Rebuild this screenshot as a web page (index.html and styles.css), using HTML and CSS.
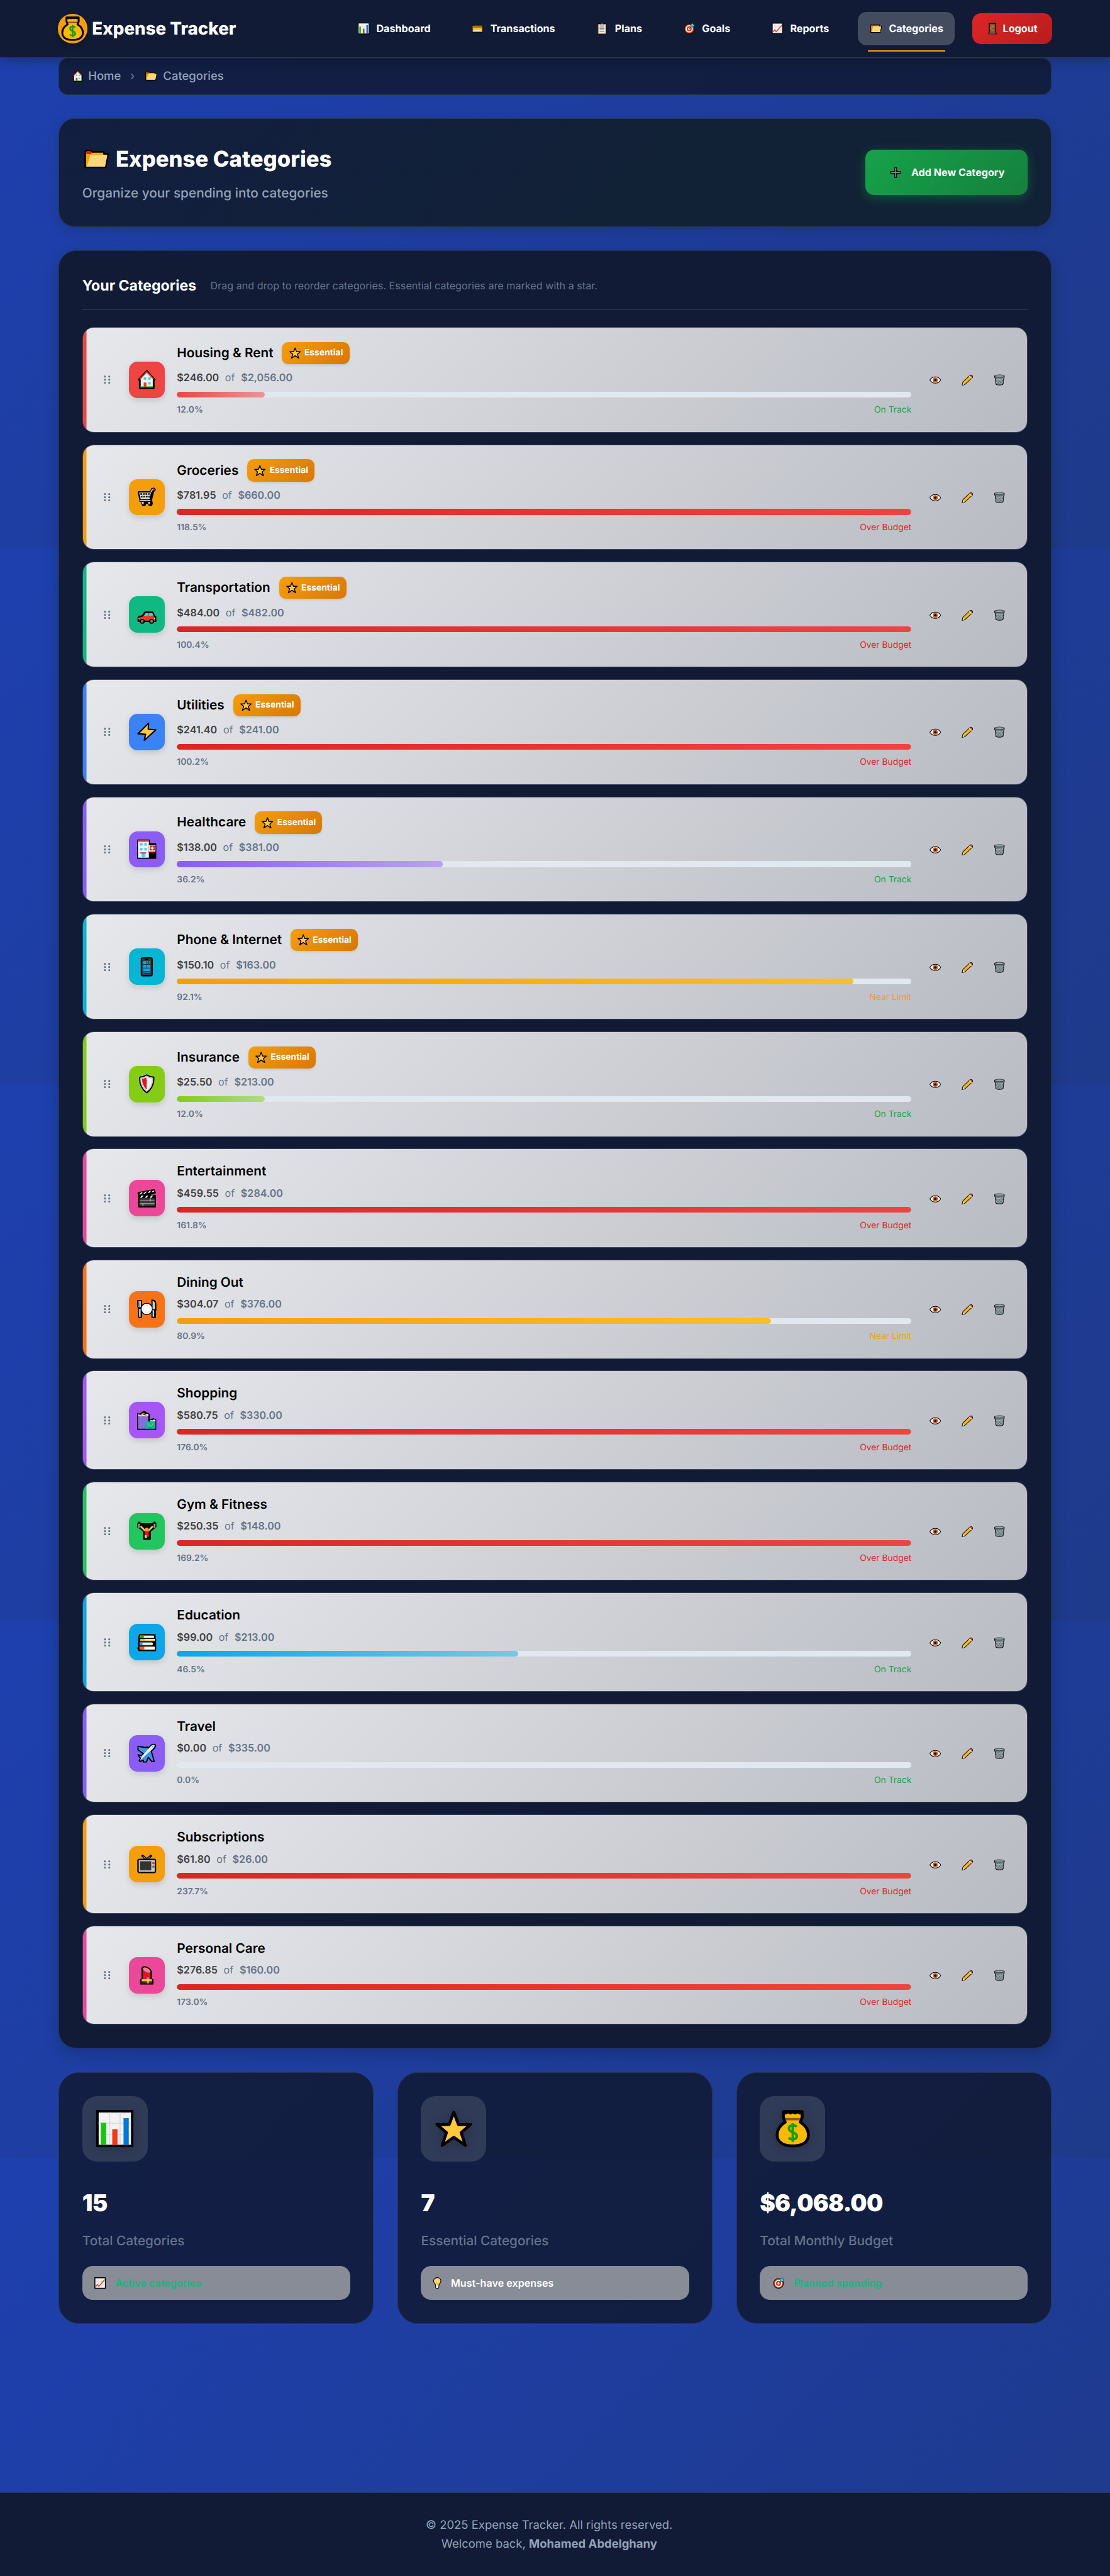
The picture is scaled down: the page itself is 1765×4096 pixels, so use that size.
FILE: index.html
```html
<!DOCTYPE html>
<html lang="en">
<head>
<meta charset="utf-8">
<title>Expense Categories</title>
<link rel="stylesheet" href="styles.css">
</head>
<body>
<svg class="defs" aria-hidden="true">
<symbol id="chart" viewBox="0 0 32 32"><path d="M1 1h30v30H1z" fill="#f2f2f2" stroke="#000" stroke-width="2.2"/><path d="M11.5 2v28M20.500 2v28M2 11.500h28M2 21h28" stroke="#ddd" stroke-width="1"/><path d="M4 11h4.500v19H4z" fill="#16c60c"/><path d="M13.800 16.500h4.500V30h-4.500z" fill="#f03a17"/><path d="M23.500 7h4.500v23h-4.500z" fill="#0078d7"/></symbol>
<symbol id="trend" viewBox="0 0 32 32"><path d="M1.500 1.500h29v29h-29z" fill="#f2f2f2" stroke="#000" stroke-width="2.6"/><path d="M11 3v26M20.500 3v26M3 11.500h26M3 21h26" stroke="#ccc" stroke-width="1"/><path d="M3.500 26l5-6 4 5L29 6" fill="none" stroke="#f03a17" stroke-width="2.400"/></symbol>
<symbol id="card" viewBox="0 0 32 32"><rect x="1.500" y="7" width="29" height="20" rx="2" fill="#ffb900" stroke="#111" stroke-width="2.600"/><path d="M3 9.500h26v4H3z" fill="#8e562e"/><path d="M6 19.500h20v3H6z" fill="#e8e8e8"/></symbol>
<symbol id="clip" viewBox="0 0 32 32"><rect x="5" y="4" width="22" height="27" rx="2" fill="#ececec" stroke="#000" stroke-width="4"/><rect x="5.500" y="4.500" width="21" height="26" rx="1" fill="#ececec" stroke="#a9794f" stroke-width="2"/><path d="M11 7V4h3a2 2 0 0 1 4 0h3v3z" fill="#ccc" stroke="#555" stroke-width="1"/><path d="M9.500 12h13M9.500 16h13M9.500 20h13M9.500 24h13" stroke="#555" stroke-width="1.500"/></symbol>
<symbol id="target" viewBox="0 0 32 32"><circle cx="15.500" cy="17" r="13.500" fill="#f03a17" stroke="#111" stroke-width="2"/><circle cx="15.500" cy="17" r="8.500" fill="none" stroke="#fff" stroke-width="3"/><circle cx="15.500" cy="17" r="3" fill="#fff"/><path d="M16 17l8-9" stroke="#0078d7" stroke-width="2"/><path d="M20 12V6l5-5 2 4 4 1-5 6z" fill="#31d2f7" stroke="#111" stroke-width="1"/></symbol>
<symbol id="folder" viewBox="0 0 32 24"><path d="M1.200 2.800l1.500-1.600h5.500l1.500 1.600h15.500v2.700h5.500L27.500 22.800H1.200z" fill="#f2a600" stroke="#000" stroke-width="2" stroke-linejoin="round"/><path d="M2.500 3h6.500v2.500H2.500z" fill="#e81123"/><path d="M7.800 6.500h21.700L26.500 21.800H3.200z" fill="#ffd679"/></symbol>
<symbol id="door" viewBox="0 0 32 32"><path d="M7 2h18v25l2 4H5l2-4z" fill="#5c3a21" stroke="#000" stroke-width="2"/><path d="M9 4h14v23H9z" fill="#8e562e"/><path d="M11.500 6.500h9v8h-9zM11.500 18h9v6h-9z" fill="#a9713f" stroke="#6b4020"/><circle cx="11" cy="16" r="1.600" fill="#ffb900"/><path d="M7 28h18v2H7z" fill="#bbb"/></symbol>
<symbol id="house" viewBox="0 0 32 32"><path d="M4.500 30.500V16.500H3L16 2l13 14.500h-1.500v14z" fill="#f2f2f2" stroke="#000" stroke-width="3" stroke-linejoin="round"/><path d="M4.500 15.500L16 3.500l11.500 12" fill="none" stroke="#f03a17" stroke-width="2"/><path d="M11 12.500h4v4h-4zM18.500 12.500h4v4h-4zM18.500 20.500h4v4h-4z" fill="#31d2f7"/><path d="M11 21h4.500v8H11z" fill="#f03a17"/><path d="M5.500 27.500H11V29.500H5.500zM15.500 27.500h11v2h-11z" fill="#16c60c"/></symbol>
<symbol id="plus" viewBox="0 0 32 32"><path d="M13.500 2h5v11.500H30v5H18.500V30h-5V18.500H2v-5h11.500z" fill="#8c9196" stroke="#0a0a0a" stroke-width="2.400"/></symbol>
<symbol id="star" viewBox="0 0 32 32"><path d="M16 2l4 10.500h10.500L22.300 19.500 26 30.500l-10-7-10 7 3.700-11L1.500 12.500H12z" fill="#ffc83d" stroke="#000" stroke-width="2.500" stroke-linejoin="round"/></symbol>
<symbol id="bag" viewBox="0 0 32 32"><path d="M8 1.500h16v5l-1.500 4C28 14 30.500 19 29 24.500 27.500 29 22 31 16 31S4.500 29 3 24.500C1.500 19 4 14 9.500 10.500L8 6.500z" fill="#ffb900" stroke="#000" stroke-width="2.500" stroke-linejoin="round"/><path d="M8 1h16v2.500l-2 .5-2-1-2 1-2-1-2 1-2-1-2 1-2-1z"/><path d="M9.800 7h12.400v2H9.800z" fill="#8e562e"/><path d="M19.500 14.500c-1.500-1.600-6.800-1.800-6.800 1.500 0 3.800 6.800 3 6.800 6.500 0 3.300-5.300 3.200-7 1.500M16 11.500v16" fill="none" stroke="#13a10e" stroke-width="2.200"/></symbol>
<symbol id="cart" viewBox="0 0 32 32"><path d="M2 7h20l2-5 4-1 2.500 3-3 3-4 16h1l1 4-2 3.500-4-1-1-3-4 0-1 3-4 1-2-3.500 0-3.500H4.500V21L2 9z" stroke="#000" stroke-width="1.500" stroke-linejoin="round"/><path d="M3.500 8.500h19.500l-2.500 11H6z" fill="#e4e4e4"/><path d="M5.500 11h16M6 15.500h15" stroke="#111" stroke-width="2.600" stroke-dasharray="3 1.200"/><path d="M23 8l2-4 3-1.500M5 22h17" fill="none" stroke="#ddd" stroke-width="1.800"/><path d="M26.500 2.500l2.500 2" stroke="#f03a17" stroke-width="2.500"/><path d="M7.500 24h3.500v4H8.500zM18 24h3.500v4H19z" fill="#ccc"/></symbol>
<symbol id="car" viewBox="0 0 32 32"><path d="M2 27v-7l7-2 4-6h13l3 7 2 1v7z" fill="#f03a17" stroke="#000" stroke-width="2.500" stroke-linejoin="round"/><path d="M11.500 18l3-4.500h4V18zM20 13.500h5l2 4.500h-7z" fill="#31d2f7"/><path d="M29 21.500v2M3 21.500v2" stroke="#fff" stroke-width="1.200"/><circle cx="8.500" cy="27" r="3.200" fill="#777" stroke="#000" stroke-width="1.800"/><circle cx="24" cy="27" r="3.200" fill="#777" stroke="#000" stroke-width="1.800"/></symbol>
<symbol id="bolt" viewBox="0 0 32 32"><path d="M19 2L1.500 19.500 14 20.500 12 30.500 31 13 18.500 12z" fill="#ffc83d" stroke="#000" stroke-width="2.300" stroke-linejoin="round"/></symbol>
<symbol id="hospital" viewBox="0 0 32 32"><path d="M0 0h21v6h11v26H0z"/><path d="M1.500 1.500h18V30h-18z" fill="#f2f2f2"/><path d="M1.500 1.500h18v2h-18z" fill="#e81123"/><path d="M5 6h4v4H5zM12 6h4v4h-4zM5 14h4v4H5zM12 14h4v4h-4z" fill="#31d2f7"/><path d="M5 21h10v2H5z" fill="#e81123"/><path d="M6.500 23h8v7h-8z" fill="#9ae6f9"/><path d="M8.500 23h4v7h-4z" fill="#31d2f7"/><path d="M19.500 9h11v11h-11z" fill="#f2f2f2"/><path d="M21 10h8.500v8H21z" fill="#e81123"/><path d="M24.200 11.200h2v1.800H28v2h-1.800v1.800h-2V15h-1.800v-2h1.800z" fill="#fff"/><path d="M18.500 20h12v1.500h-12z" fill="#e81123"/></symbol>
<symbol id="phone" viewBox="0 0 32 32"><rect x="7" y="1" width="18" height="30" rx="2.500" fill="#3a3a3a" stroke="#000" stroke-width="2"/><path d="M10 6.500h12v19H10z" fill="#10a5e8"/><path d="M16 6.500v11M10 12h6M16 9.500h6M16 12h6M19 6.500v5.500M10 18h12M10 23.500h12M14 23.500v2M18 23.500v2" stroke="#222" stroke-width=".9"/><path d="M13.500 3.700h5" stroke="#000" stroke-width="1.200"/></symbol>
<symbol id="shield" viewBox="0 0 32 32"><path d="M16 1.500c4 2.400 7.500 3.200 11.500 3.700C28 17 23.500 25 16 30.500 8.500 25 4 17 4.500 5.200 8.500 4.700 12 3.900 16 1.500z" fill="#f4f4f4" stroke="#000" stroke-width="2.400"/><path d="M16 3.500c3.500 2 6.500 2.800 9.700 3.200C26 16.500 22 23.500 16 28.300 10 23.500 6 16.500 6.300 6.700 9.500 6.300 12.500 5.500 16 3.500z" fill="none" stroke="#c8c8c8" stroke-width="2"/><path d="M15.500 5.500c-2.500 1.400-5 2-7.300 2.400.2 6.800 2.300 12.600 7.300 17.300l1-2-1-2 1-2-1-2 1-2-1-2 1-2-1-2z" fill="#e81123"/></symbol>
<symbol id="clapper" viewBox="0 0 32 32"><path d="M1.500 6.500L28.500 1.500l2 5.500-15 4h15V30.500h-28V12z" stroke="#000" stroke-width="1.500" stroke-linejoin="round"/><path d="M4 16h25v13H4z" fill="#3a3a3a"/><path d="M3.500 10l3-3.500 3-.5-3 3.500zM10.500 8.700l3-3.500 3-.5-3 3.500zM17.500 7.400l3-3.500 3-.5-3 3.500zM24 6l3-3.300 1.500 2zM5 15l2.500-3.500h3L8 15zM13 15l2.500-3.500h3L16 15zM21 15l2.500-3.500h3L24 15z" fill="#fff"/><path d="M4 20.300h25M4 25h25M22 16v4.300M9.500 25v4" stroke="#ddd"/></symbol>
<symbol id="dish" viewBox="0 0 32 32"><path d="M.5 2h7v28H2.500V15L.5 12zM24.500 1c4 0 7 2 7 7v10h-1v12h-6z" stroke="#000" stroke-width="1.500" stroke-linejoin="round"/><circle cx="16" cy="16" r="9.500" fill="#fff" stroke="#000" stroke-width="1.600"/><circle cx="16" cy="16" r="6" fill="none" stroke="#ddd"/><path d="M1.800 3v8l1.700 1.500h2.200V3M3.700 3v8" fill="none" stroke="#d0d0d0" stroke-width="1.200"/><path d="M3.300 16h2.600v13H3.300zM25.700 18h2.600v11h-2.600z" fill="#a6d8f5"/><path d="M25.700 2.500c2.500.5 4 2.500 4 5.500v8.500h-4z" fill="#d0d0d0"/></symbol>
<symbol id="bags" viewBox="0 0 32 32"><path d="M0 3l3 2 4-2c2-3 7-3 9 0l3 1 2 2v7l3 1 3-2 2 2 3-1v19H0z"/><path d="M1.500 7l3 1.500 4-1.500 5 1.500 5-1.500V30h-17z" fill="#886ce4"/><path d="M2 5.500l3 2 3-2 4 2 4-2 3.500 1-1 2H2z" fill="#eee"/><path d="M6 11c0-8 9-8 9 0" fill="none" stroke="#f2a600" stroke-width="1.600"/><path d="M14 18h16.500v12H14z" fill="#00b7a0"/><path d="M22 15l3 1.500 3-2 2.500 1.500v2H22z" fill="#eee"/><path d="M17.500 20c0 7 9 7 9 0" fill="none" stroke="#f2a600" stroke-width="1.500"/></symbol>
<symbol id="gym" viewBox="0 0 32 32"><path d="M3 1l4 3h18l4-3 2.500 3v5L28 12l-6 5v13H11V17l-6-5-4-2V4z" stroke="#000" stroke-width="1.500" stroke-linejoin="round"/><path d="M1.500 4h3v7h-3zM27.500 4h3v7h-3z" fill="#999"/><path d="M6 8l6.500 7h7L26 8" fill="none" stroke="#ffc83d" stroke-width="3"/><path d="M12.500 15h7v9h-7z" fill="#e81123"/><circle cx="16" cy="13.500" r="3" fill="#f0a13a"/><path d="M12.500 23h4v5h-4z" fill="#ffc83d"/><path d="M16 23h3.500v3H16z" fill="#0063b1"/></symbol>
<symbol id="books" viewBox="0 0 32 32"><path d="M4 3h26v7.500h1v5l-2 3h2V30H3l-2-4 2-4-1-4 1-5-1-4z" stroke="#000" stroke-width="1.500" stroke-linejoin="round"/><path d="M5 4.500h22v4H4z" fill="#16c60c"/><path d="M12 5.500h16v3H11z" fill="#fff"/><path d="M5 10.500h25v3.500H5z" fill="#ffb900"/><path d="M13 11h17v1.800H13z" fill="#fff"/><path d="M4 16h21v5H4z" fill="#3a96dd"/><path d="M9 16.700h17v3.500H9z" fill="#fff"/><path d="M3.500 23h26v5.500h-25z" fill="#f7630c"/><path d="M12 23.500h17.500v4.500H12z" fill="#fff"/></symbol>
<symbol id="plane" viewBox="0 0 32 32"><path d="M1.500 5l13 2 2-1 2 2 5-5c3-2 8-2 7 2-1 3-4 6-7 8l5 17h-4l-6-7-3 8h-5v-3l-5 2-2-1 2-4-4-6 5 1 5-2L1.500 11z" fill="#3a96dd" stroke="#000" stroke-width="2" stroke-linejoin="round"/><path d="M5 28l4-8L22.500 5c3-3 7-3 6-.5-1 3-4 6-7 8.500L12 22z" fill="#eee"/><path d="M24 6.500l3-2" stroke="#31d2f7" stroke-width="2"/></symbol>
<symbol id="tv" viewBox="0 0 32 32"><path d="M9 2l7 6 7-6" fill="none" stroke="#000" stroke-width="4" stroke-linecap="round"/><path d="M10 3l6 5 6-5" fill="none" stroke="#999" stroke-width="1.300"/><rect x="1.500" y="8" width="29" height="21.500" rx="2" fill="#ccc" stroke="#000" stroke-width="2.400"/><path d="M4.500 11h19v15h-19z" fill="#333"/><circle cx="27" cy="14" r="2.100" fill="#f03a17"/><circle cx="27" cy="20" r="2.100" fill="#777"/></symbol>
<symbol id="lipstick" viewBox="0 0 32 32"><path d="M8.500 24V5c2-5 13-1 15 6v13h2.500v7H6v-7z" fill="#e81123" stroke="#000" stroke-width="2.400" stroke-linejoin="round"/><path d="M9.500 5c3-3 11-.5 13 6-3 3-12 0-13-6z" fill="#e88090"/><path d="M7.500 23h17v3.500h-17z" fill="#ffb900"/><path d="M7.500 26.500h17V30h-17z" fill="#333"/><path d="M16 20h4v10h-4z" fill="#fff" opacity=".5"/></symbol>
<symbol id="eye" viewBox="0 0 32 32"><path d="M1 16c7-11.500 23-11.500 30 0-7 11.500-23 11.500-30 0z" fill="#fff" stroke="#000" stroke-width="1.800"/><circle cx="16" cy="16" r="6.800" fill="#da5a14"/><circle cx="16" cy="16" r="3.200"/></symbol>
<symbol id="pencil" viewBox="0 0 32 32"><path d="M1.500 30.500l2-8.500L23.500 3c3-2.500 8.500 1.500 6.500 6L9.500 28z" fill="#ffb900" stroke="#111" stroke-width="1.800" stroke-linejoin="round"/><path d="M3 29.500l1.200-5.500 3.500 4z" fill="#eee"/><path d="M20.500 6l6 6.300 2-2-6-6.200z" fill="#ddd"/><path d="M22.700 4c3-3 8.500 2 6 6z" fill="#e83040"/></symbol>
<symbol id="trash" viewBox="0 0 32 32"><path d="M2.500 4h27l-.5 6h-1l-2 18c-4 2.500-16 2.500-20 0L4 10H3z" fill="#69797e" stroke="#000" stroke-width="1.600" stroke-linejoin="round"/><ellipse cx="16" cy="5" rx="13" ry="3.300" fill="#8fa3a8" stroke="#222" stroke-width="1.300"/><path d="M6 12l14 16M12 11l13 13M5.500 20l7 8M26 12L12 28M20 11L7 24M27 19l-7 9M26.500 14l-20 1" stroke="#c4d0d4" stroke-width="1"/></symbol>
<symbol id="bulb" viewBox="0 0 32 32"><path d="M16 1c7 0 10 5 10 9.500 0 6-5 7.500-5.500 11.500v6c-1 4-8 4-9 0v-6C11 18 6 16.500 6 10.500 6 6 9 1 16 1z" fill="#ffd679" stroke="#000" stroke-width="1.900"/><path d="M12.700 21h6.600v8h-6.600z" fill="#e8e8e8"/><path d="M13 14.500l3 5 3-5" fill="none" stroke="#ffb900" stroke-width="2"/></symbol>
<symbol id="grip" viewBox="0 0 12 14"><g fill="#64748b"><circle cx="2" cy="1.800" r="1.700"/><circle cx="9.500" cy="1.800" r="1.700"/><circle cx="2" cy="7.200" r="1.700"/><circle cx="9.500" cy="7.200" r="1.700"/><circle cx="2" cy="12.600" r="1.700"/><circle cx="9.500" cy="12.600" r="1.700"/></g></symbol>
</svg>

<header class="nav">
  <div class="brand"><span class="brand-mark"><svg><use href="#bag"/></svg></span>Expense Tracker</div>
  <nav class="links">
    <a class="link"><svg class="em"><use href="#chart"/></svg>Dashboard</a>
    <a class="link"><svg class="em"><use href="#card"/></svg>Transactions</a>
    <a class="link"><svg class="em"><use href="#clip"/></svg>Plans</a>
    <a class="link"><svg class="em"><use href="#target"/></svg>Goals</a>
    <a class="link"><svg class="em"><use href="#trend"/></svg>Reports</a>
    <a class="link active"><svg class="em"><use href="#folder"/></svg>Categories</a>
    <a class="logout"><svg class="em"><use href="#door"/></svg>Logout</a>
  </nav>
</header>

<main class="page">
  <div class="crumbs"><svg class="em"><use href="#house"/></svg><span>Home</span><span class="sep">›</span><svg class="em"><use href="#folder"/></svg><span>Categories</span></div>

  <section class="hero">
    <div>
      <h1><svg><use href="#folder"/></svg>Expense Categories</h1>
      <p>Organize your spending into categories</p>
    </div>
    <button class="add"><svg><use href="#plus"/></svg>Add New Category</button>
  </section>

  <section class="panel">
    <div class="panel-head"><h2>Your Categories</h2><p>Drag and drop to reorder categories. Essential categories are marked with a star.</p></div>
    <div class="rows">
      <article class="row c-red"><svg class="grip"><use href="#grip"/></svg><span class="tile"><svg><use href="#house"/></svg></span><div class="info"><div class="name">Housing &amp; Rent<span class="badge"><svg><use href="#star"/></svg>Essential</span></div><div class="money"><b>$246.00</b><span>of</span><i>$2,056.00</i></div><div class="bar"><div class="fill" style="width:12%"></div></div><div class="foot"><b>12.0%</b><span class="ok">On Track</span></div></div><div class="acts"><svg><use href="#eye"/></svg><svg><use href="#pencil"/></svg><svg><use href="#trash"/></svg></div></article>
      <article class="row c-amber"><svg class="grip"><use href="#grip"/></svg><span class="tile"><svg><use href="#cart"/></svg></span><div class="info"><div class="name">Groceries<span class="badge"><svg><use href="#star"/></svg>Essential</span></div><div class="money"><b>$781.95</b><span>of</span><i>$660.00</i></div><div class="bar"><div class="fill full" style="width:100%"></div></div><div class="foot"><b>118.5%</b><span class="over">Over Budget</span></div></div><div class="acts"><svg><use href="#eye"/></svg><svg><use href="#pencil"/></svg><svg><use href="#trash"/></svg></div></article>
      <article class="row c-emerald"><svg class="grip"><use href="#grip"/></svg><span class="tile"><svg><use href="#car"/></svg></span><div class="info"><div class="name">Transportation<span class="badge"><svg><use href="#star"/></svg>Essential</span></div><div class="money"><b>$484.00</b><span>of</span><i>$482.00</i></div><div class="bar"><div class="fill full" style="width:100%"></div></div><div class="foot"><b>100.4%</b><span class="over">Over Budget</span></div></div><div class="acts"><svg><use href="#eye"/></svg><svg><use href="#pencil"/></svg><svg><use href="#trash"/></svg></div></article>
      <article class="row c-blue"><svg class="grip"><use href="#grip"/></svg><span class="tile"><svg><use href="#bolt"/></svg></span><div class="info"><div class="name">Utilities<span class="badge"><svg><use href="#star"/></svg>Essential</span></div><div class="money"><b>$241.40</b><span>of</span><i>$241.00</i></div><div class="bar"><div class="fill full" style="width:100%"></div></div><div class="foot"><b>100.2%</b><span class="over">Over Budget</span></div></div><div class="acts"><svg><use href="#eye"/></svg><svg><use href="#pencil"/></svg><svg><use href="#trash"/></svg></div></article>
      <article class="row c-violet"><svg class="grip"><use href="#grip"/></svg><span class="tile"><svg><use href="#hospital"/></svg></span><div class="info"><div class="name">Healthcare<span class="badge"><svg><use href="#star"/></svg>Essential</span></div><div class="money"><b>$138.00</b><span>of</span><i>$381.00</i></div><div class="bar"><div class="fill" style="width:36.2%"></div></div><div class="foot"><b>36.2%</b><span class="ok">On Track</span></div></div><div class="acts"><svg><use href="#eye"/></svg><svg><use href="#pencil"/></svg><svg><use href="#trash"/></svg></div></article>
      <article class="row c-cyan"><svg class="grip"><use href="#grip"/></svg><span class="tile"><svg><use href="#phone"/></svg></span><div class="info"><div class="name">Phone &amp; Internet<span class="badge"><svg><use href="#star"/></svg>Essential</span></div><div class="money"><b>$150.10</b><span>of</span><i>$163.00</i></div><div class="bar"><div class="fill warn" style="width:92.1%"></div></div><div class="foot"><b>92.1%</b><span class="near">Near Limit</span></div></div><div class="acts"><svg><use href="#eye"/></svg><svg><use href="#pencil"/></svg><svg><use href="#trash"/></svg></div></article>
      <article class="row c-lime"><svg class="grip"><use href="#grip"/></svg><span class="tile"><svg><use href="#shield"/></svg></span><div class="info"><div class="name">Insurance<span class="badge"><svg><use href="#star"/></svg>Essential</span></div><div class="money"><b>$25.50</b><span>of</span><i>$213.00</i></div><div class="bar"><div class="fill" style="width:12%"></div></div><div class="foot"><b>12.0%</b><span class="ok">On Track</span></div></div><div class="acts"><svg><use href="#eye"/></svg><svg><use href="#pencil"/></svg><svg><use href="#trash"/></svg></div></article>
      <article class="row short c-pink"><svg class="grip"><use href="#grip"/></svg><span class="tile"><svg><use href="#clapper"/></svg></span><div class="info"><div class="name">Entertainment</div><div class="money"><b>$459.55</b><span>of</span><i>$284.00</i></div><div class="bar"><div class="fill full" style="width:100%"></div></div><div class="foot"><b>161.8%</b><span class="over">Over Budget</span></div></div><div class="acts"><svg><use href="#eye"/></svg><svg><use href="#pencil"/></svg><svg><use href="#trash"/></svg></div></article>
      <article class="row short c-orange"><svg class="grip"><use href="#grip"/></svg><span class="tile"><svg><use href="#dish"/></svg></span><div class="info"><div class="name">Dining Out</div><div class="money"><b>$304.07</b><span>of</span><i>$376.00</i></div><div class="bar"><div class="fill warn" style="width:80.9%"></div></div><div class="foot"><b>80.9%</b><span class="near">Near Limit</span></div></div><div class="acts"><svg><use href="#eye"/></svg><svg><use href="#pencil"/></svg><svg><use href="#trash"/></svg></div></article>
      <article class="row short c-purple"><svg class="grip"><use href="#grip"/></svg><span class="tile"><svg><use href="#bags"/></svg></span><div class="info"><div class="name">Shopping</div><div class="money"><b>$580.75</b><span>of</span><i>$330.00</i></div><div class="bar"><div class="fill full" style="width:100%"></div></div><div class="foot"><b>176.0%</b><span class="over">Over Budget</span></div></div><div class="acts"><svg><use href="#eye"/></svg><svg><use href="#pencil"/></svg><svg><use href="#trash"/></svg></div></article>
      <article class="row short c-green"><svg class="grip"><use href="#grip"/></svg><span class="tile"><svg><use href="#gym"/></svg></span><div class="info"><div class="name">Gym &amp; Fitness</div><div class="money"><b>$250.35</b><span>of</span><i>$148.00</i></div><div class="bar"><div class="fill full" style="width:100%"></div></div><div class="foot"><b>169.2%</b><span class="over">Over Budget</span></div></div><div class="acts"><svg><use href="#eye"/></svg><svg><use href="#pencil"/></svg><svg><use href="#trash"/></svg></div></article>
      <article class="row short c-sky"><svg class="grip"><use href="#grip"/></svg><span class="tile"><svg><use href="#books"/></svg></span><div class="info"><div class="name">Education</div><div class="money"><b>$99.00</b><span>of</span><i>$213.00</i></div><div class="bar"><div class="fill" style="width:46.5%"></div></div><div class="foot"><b>46.5%</b><span class="ok">On Track</span></div></div><div class="acts"><svg><use href="#eye"/></svg><svg><use href="#pencil"/></svg><svg><use href="#trash"/></svg></div></article>
      <article class="row short c-violet"><svg class="grip"><use href="#grip"/></svg><span class="tile"><svg><use href="#plane"/></svg></span><div class="info"><div class="name">Travel</div><div class="money"><b>$0.00</b><span>of</span><i>$335.00</i></div><div class="bar"><div class="fill" style="width:0%"></div></div><div class="foot"><b>0.0%</b><span class="ok">On Track</span></div></div><div class="acts"><svg><use href="#eye"/></svg><svg><use href="#pencil"/></svg><svg><use href="#trash"/></svg></div></article>
      <article class="row short c-amber"><svg class="grip"><use href="#grip"/></svg><span class="tile"><svg><use href="#tv"/></svg></span><div class="info"><div class="name">Subscriptions</div><div class="money"><b>$61.80</b><span>of</span><i>$26.00</i></div><div class="bar"><div class="fill full" style="width:100%"></div></div><div class="foot"><b>237.7%</b><span class="over">Over Budget</span></div></div><div class="acts"><svg><use href="#eye"/></svg><svg><use href="#pencil"/></svg><svg><use href="#trash"/></svg></div></article>
      <article class="row short c-pink"><svg class="grip"><use href="#grip"/></svg><span class="tile"><svg><use href="#lipstick"/></svg></span><div class="info"><div class="name">Personal Care</div><div class="money"><b>$276.85</b><span>of</span><i>$160.00</i></div><div class="bar"><div class="fill full" style="width:100%"></div></div><div class="foot"><b>173.0%</b><span class="over">Over Budget</span></div></div><div class="acts"><svg><use href="#eye"/></svg><svg><use href="#pencil"/></svg><svg><use href="#trash"/></svg></div></article>
    </div>
  </section>

  <section class="stats">
    <div class="stat"><span class="stat-icon"><svg><use href="#chart"/></svg></span><strong>15</strong><p>Total Categories</p><div class="pill good"><svg><use href="#trend"/></svg>Active categories</div></div>
    <div class="stat"><span class="stat-icon"><svg><use href="#star"/></svg></span><strong>7</strong><p>Essential Categories</p><div class="pill tight"><svg><use href="#bulb"/></svg>Must-have expenses</div></div>
    <div class="stat"><span class="stat-icon"><svg class="tall"><use href="#bag"/></svg></span><strong>$6,068.00</strong><p>Total Monthly Budget</p><div class="pill good wide"><svg><use href="#target"/></svg>Planned spending</div></div>
  </section>
</main>

<footer class="bottom"><p>© 2025 Expense Tracker. All rights reserved.</p><p>Welcome back, <b>Mohamed Abdelghany</b></p></footer>
</body>
</html>
```
FILE: styles.css
```css
html { font-size: 18.482px; }
* { box-sizing: border-box; margin: 0; padding: 0; }
body {
  font-family: Inter, "Liberation Sans", sans-serif;
  font-size: 1rem;
  color: #fff;
  height: 4096px;
  display: flex;
  flex-direction: column;
  overflow: hidden;
  text-rendering: geometricPrecision;
  background: linear-gradient(135deg, #1e40af, #1e3a8a) 0 1rem / 100% 46.16rem;
}
.defs { position: absolute; width: 0; height: 0; }
svg { display: block; flex: none; overflow: visible; }
b, i { font-style: normal; }

/* Top bar */
.nav {
  height: 4.975rem;
  flex: none;
  padding: 0 5rem;
  display: flex;
  align-items: center;
  justify-content: space-between;
  background: #111b35;
  border-bottom: 1px solid #2c3550;
  box-shadow: 0 .2rem 1rem rgba(0,0,0,.25);
  position: relative;
  z-index: 1;
}
.brand { display: flex; align-items: center; gap: .42rem; font-size: 1.5rem; font-weight: 800; }
.brand-mark { width: 2.5rem; height: 2.5rem; font-size: 1rem; border-radius: 50%; background: #f59e0b; display: grid; place-items: center; box-shadow: 0 .2rem .5rem rgba(0,0,0,.2); }
.brand-mark svg { width: 2.1rem; height: 2.1rem; }
.links { display: flex; align-items: center; gap: 1.5rem; font-size: .875rem; font-weight: 700; }
.em { width: 1rem; height: 1rem; }
.link { height: 2.9rem; padding: 0 1rem; display: flex; align-items: center; position: relative; border-radius: .75rem; }
.link .em { margin: 0 .6rem 0 .05rem; }
.active { background: #434b5f; }
.active::after { content: ""; position: absolute; left: 10%; right: 10%; bottom: -.5rem; height: 2px; background: #f59e0b; }
.logout { height: 2.65rem; padding: 0 1.24rem; display: flex; align-items: center; gap: .38rem; border-radius: .75rem; background: linear-gradient(135deg, #dc2626, #b91c1c); }

.page { width: 85.4rem; margin-left: 5.05rem; flex: 1; display: flex; flex-direction: column; }

/* Breadcrumb */
.crumbs {
  height: 3.175rem;
  padding: 0 1rem;
  display: flex;
  align-items: center;
  color: #94a3b8;
  font-weight: 500;
  background: rgba(15,23,42,.8);
  border: 1px solid #27324f;
  border-radius: .8rem;
}
.crumbs .em { margin: 0 .36rem 0 .08rem; width: 1.04rem; height: 1.06rem; }
.sep { color: #64748b; margin: 0 .85rem 0 .78rem; }
.crumbs .sep + .em { margin-right: .48rem; }

/* Page heading */
.hero {
  height: 9.4rem;
  margin-top: 2rem;
  padding: 0 1.97rem;
  display: flex;
  justify-content: space-between;
  align-items: center;
  background: linear-gradient(135deg, rgba(17,30,62,.98), rgba(17,33,52,.98) 60%);
  border: 1px solid #2a3654;
  border-radius: 1.4rem;
  box-shadow: 0 .3rem 1rem rgba(0,0,0,.15);
}
.hero h1 { display: flex; align-items: center; gap: .55rem; font-size: 1.875rem; line-height: 2.25rem; font-weight: 800; margin-top: .42rem; }
.hero h1 svg { width: 2.15rem; height: 1.61rem; margin-left: .18rem; }
.hero p { font-size: 1.125rem; line-height: 1.8rem; font-weight: 500; color: #94a3b8; margin-top: .9rem; }
.add {
  width: 13.95rem;
  height: 3.9rem;
  border: 0;
  border-radius: .75rem;
  color: #fff;
  font: 700 .875rem Inter, sans-serif;
  display: flex;
  align-items: center;
  padding-left: 2.1rem;
  gap: .82rem;
  background: linear-gradient(135deg, #16a34a, #15803d);
  box-shadow: 0 .25rem .95rem rgba(22,163,74,.4);
}
.add svg { width: 1rem; height: 1rem; }

/* Category list */
.panel {
  height: 154.7rem;
  flex: none;
  margin-top: 2rem;
  padding: 2rem 1.97rem 0;
  background: #111b35;
  border: 1px solid #27324c;
  border-radius: 1.5rem;
  box-shadow: 0 .4rem 1.3rem rgba(0,0,0,.2);
}
.panel-head { display: flex; align-items: center; gap: 1.2rem; height: 3.05rem; padding-bottom: 1rem; border-bottom: 1px solid #2f3a55; }
.panel-head h2 { font-size: 1.25rem; line-height: 2rem; font-weight: 700; }
.panel-head p { font-size: .875rem; line-height: 1.4rem; color: #64748b; }
.rows { display: flex; flex-direction: column; gap: 1.025rem; margin-top: 1.48rem; }
.row {
  height: 9.075rem;
  border: 1px solid #36445d;
  border-radius: 1rem;
  display: flex;
  align-items: center;
  padding: 0 1.2rem 0 1.8rem;
  background: linear-gradient(var(--c), var(--c)) 0 0 / .3rem 100% no-repeat, linear-gradient(135deg, #e7e8ec, #b8bbc2);
}
.row.short { height: 8.525rem; }
.grip { width: .6rem; height: .7rem; margin-right: 1.55rem; }
.tile { width: 3.125rem; height: 3.125rem; flex: none; border-radius: .75rem; background: var(--c); display: grid; place-items: center; box-shadow: 0 .2rem .5rem rgba(0,0,0,.13); }
.tile svg { width: 1.66rem; height: 1.66rem; }
.info { width: 63.2rem; margin-left: 1.02rem; align-self: stretch; padding-top: 1.24rem; }
.name { height: 1.9rem; display: flex; align-items: center; gap: .75rem; font-size: 1.125rem; font-weight: 600; color: #000; }
.short .name { height: 1.35rem; }
.badge { height: 1.9rem; padding: 0 .55rem 0 .6rem; display: flex; align-items: center; gap: .32rem; font-size: .75rem; font-weight: 700; color: #fff; border-radius: .55rem; background: linear-gradient(135deg, #f59e0b, #d97706); box-shadow: 0 .1rem .2rem rgba(0,0,0,.1); }
.badge svg { width: 1rem; height: 1rem; }
.money { height: 1.4rem; margin-top: .46rem; display: flex; align-items: center; gap: .52rem; font-size: .875rem; font-weight: 600; color: #64748b; }
.money b { color: #404040; font-weight: 600; }
.money span { font-weight: 400; }
.bar { height: .5rem; margin-top: .515rem; border-radius: .25rem; background: #e2e8f0; overflow: hidden; }
.fill { height: 100%; border-radius: .25rem; background: linear-gradient(90deg, var(--c), color-mix(in srgb, var(--c) 50%, transparent)); }
.fill.full { background: linear-gradient(90deg, #dc2626, #ef4444); }
.fill.warn { background: linear-gradient(90deg, #f59e0b, #fbbf24); }
.foot { height: 1.2rem; margin-top: .5rem; display: flex; align-items: center; justify-content: space-between; font-size: .75rem; color: #64748b; }
.foot b { font-weight: 600; }
.foot span { font-weight: 400; }
.foot .ok { color: #16a34a; }
.foot .over { color: #dc2626; }
.foot .near { color: #f59e0b; }
.acts { margin-left: auto; margin-right: .68rem; display: flex; gap: 1.75rem; padding-top: .1rem; }
.acts svg { width: 1rem; height: 1rem; }
.c-red { --c: #ef4444; }
.c-amber { --c: #f59e0b; }
.c-emerald { --c: #10b981; }
.c-blue { --c: #3b82f6; }
.c-violet { --c: #8b5cf6; }
.c-cyan { --c: #06b6d4; }
.c-lime { --c: #84cc16; }
.c-pink { --c: #ec4899; }
.c-orange { --c: #f97316; }
.c-purple { --c: #a855f7; }
.c-green { --c: #22c55e; }
.c-sky { --c: #0ea5e9; }

/* Summary cards */
.stats { display: grid; grid-template-columns: repeat(3, 1fr); gap: 2.05rem; margin-top: 2.03rem; }
.stat { height: 21.65rem; padding: 2rem 1.97rem; background: rgba(15,23,42,.8); border: 1px solid #27324f; border-radius: 1.75rem; }
.stat-icon { width: 5.625rem; height: 5.625rem; border-radius: 1.25rem; background: #303b58; display: grid; place-items: center; }
.stat-icon svg { width: 3.2rem; height: 3.2rem; filter: drop-shadow(0 .15rem .4rem rgba(0,0,0,.2)); }
.stat-icon .tall { height: 3.4rem; }
.stat strong { display: block; margin-top: 2.36rem; font-size: 2rem; line-height: 2.5rem; font-weight: 900; letter-spacing: -.02em; }
.stat p { margin-top: 1.08rem; font-size: 1.125rem; line-height: 1.8rem; font-weight: 500; color: #64748b; }
.pill { margin-top: 1.26rem; height: 2.9rem; border-radius: .9rem; padding-left: 1.02rem; display: flex; align-items: center; gap: .82rem; background: #888c96; font-size: .875rem; font-weight: 600; }
.pill svg { width: 1rem; height: 1rem; }
.pill.tight { padding-left: .92rem; gap: .65rem; }
.pill.wide { padding-left: 1.1rem; gap: .82rem; }
.pill.good { color: #10b981; }

.bottom { height: 7.185rem; flex: none; padding: 2rem 1rem 0 0; text-align: center; color: #94a3b8; line-height: 1.6rem; background: #111b35; border-top: 1px solid #2c3550; }
.bottom b { font-weight: 700; }
```
